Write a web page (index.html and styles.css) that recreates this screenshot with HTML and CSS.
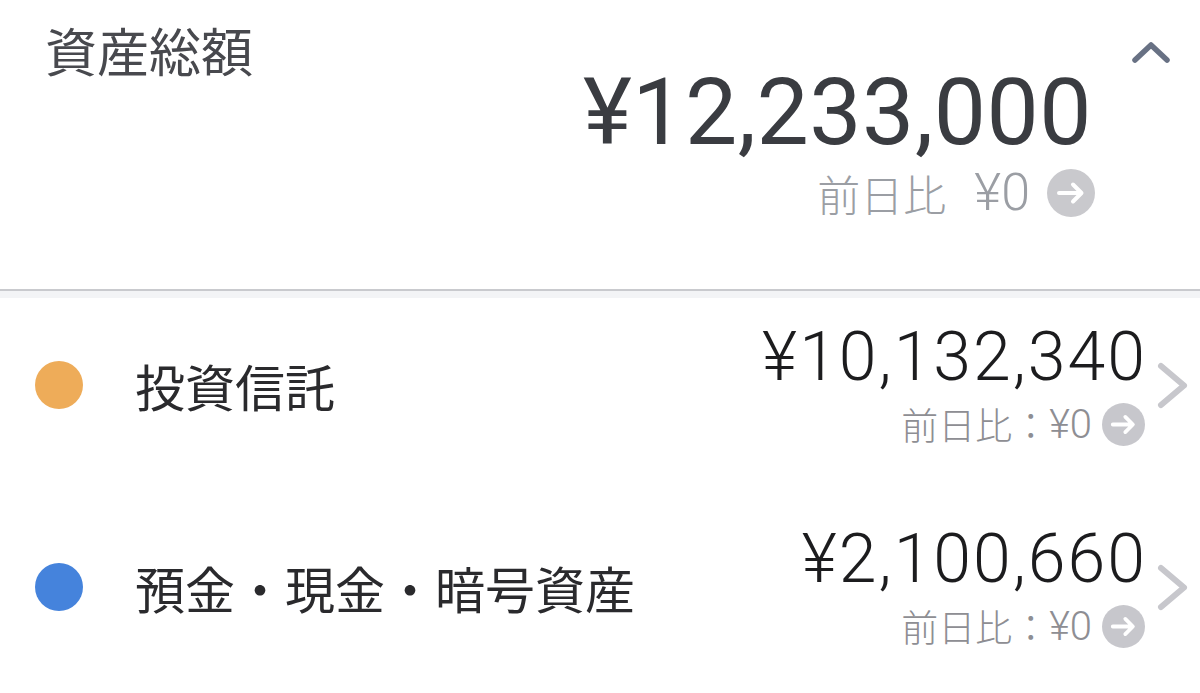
FILE: index.html
```html
<!DOCTYPE html>
<html lang="ja">
<head>
<meta charset="utf-8">
<title>資産総額</title>
<link rel="stylesheet" href="styles.css">
</head>
<body>
<section class="summary">
  <h1 class="title">資産総額</h1>
  <div class="total">
    <div class="total-amount">¥12,233,000</div>
    <div class="change change-lg">
      <span class="change-text">前日比</span>
      <span class="change-num">¥0</span>
      <svg class="go go-lg" viewBox="0 0 48 48" aria-hidden="true">
        <circle cx="24" cy="24" r="24" fill="#c9c9cd"/>
        <path d="M12 24 H34 M26 15.5 L34.5 24 L26 32.5" fill="none" stroke="#fff" stroke-width="4" stroke-linecap="round" stroke-linejoin="round"/>
      </svg>
    </div>
  </div>
  <svg class="collapse" viewBox="0 0 40 24" aria-hidden="true">
    <path d="M4 20 L20 5 L36 20" fill="none" stroke="#687184" stroke-width="5.5" stroke-linecap="round" stroke-linejoin="round"/>
  </svg>
</section>
<div class="divider"></div>
<ul class="list">
  <li class="row">
    <span class="dot dot-orange"></span>
    <span class="label">投資信託</span>
    <div class="value">
      <div class="amount">¥10,132,340</div>
      <div class="change">
        <span class="change-text">前日比：</span>
        <span class="change-num">¥0</span>
        <svg class="go" viewBox="0 0 48 48" aria-hidden="true">
          <circle cx="24" cy="24" r="24" fill="#c7c7cc"/>
          <path d="M12 24 H34 M26 15.5 L34.5 24 L26 32.5" fill="none" stroke="#fff" stroke-width="4.2" stroke-linecap="round" stroke-linejoin="round"/>
        </svg>
      </div>
    </div>
    <svg class="chev" viewBox="0 0 31 47" aria-hidden="true">
      <path d="M4 4 L27 23.5 L4 43" fill="none" stroke="#c7c7cc" stroke-width="6" stroke-linecap="round" stroke-linejoin="round"/>
    </svg>
  </li>
  <li class="row">
    <span class="dot dot-blue"></span>
    <span class="label">預金・現金・暗号資産</span>
    <div class="value">
      <div class="amount">¥2,100,660</div>
      <div class="change">
        <span class="change-text">前日比：</span>
        <span class="change-num">¥0</span>
        <svg class="go" viewBox="0 0 48 48" aria-hidden="true">
          <circle cx="24" cy="24" r="24" fill="#c7c7cc"/>
          <path d="M12 24 H34 M26 15.5 L34.5 24 L26 32.5" fill="none" stroke="#fff" stroke-width="4.2" stroke-linecap="round" stroke-linejoin="round"/>
        </svg>
      </div>
    </div>
    <svg class="chev" viewBox="0 0 31 47" aria-hidden="true">
      <path d="M4 4 L27 23.5 L4 43" fill="none" stroke="#c7c7cc" stroke-width="6" stroke-linecap="round" stroke-linejoin="round"/>
    </svg>
  </li>
</ul>
</body>
</html>
```

FILE: styles.css
```css
* { box-sizing: border-box; }

html, body {
  margin: 0;
  padding: 0;
  background: #ffffff;
  width: 1200px;
  height: 693px;
  overflow: hidden;
  font-family: "Noto Sans CJK JP", "Noto Sans", sans-serif;
}

.summary {
  display: flex;
  align-items: flex-start;
  height: 289px;
  padding: 0 29px 0 45px;
}

.title {
  margin: 24px 0 0 0;
  font-size: 52px;
  font-weight: 400;
  line-height: 1;
  color: #48494e;
}

.total {
  margin-left: auto;
  margin-top: 66px;
  display: flex;
  flex-direction: column;
  align-items: flex-end;
}

.total-amount {
  font-family: Roboto, "Liberation Sans", sans-serif;
  font-size: 93px;
  font-weight: 400;
  line-height: 1;
  letter-spacing: 0.5px;
  color: #3a3c41;
  margin-right: 3px;
}

.change {
  display: flex;
  align-items: center;
  margin-top: 11px;
  height: 46px;
  line-height: 1;
  color: #8e8e93;
}

.change-text {
  font-family: "Noto Sans CJK JP", sans-serif;
  font-size: 37px;
  font-weight: 300;
  white-space: nowrap;
}

.change-num {
  font-family: Roboto, "Liberation Sans", sans-serif;
  font-size: 40px;
  font-weight: 300;
  margin-left: 0;
  margin-right: 10px;
}

.change-lg {
  margin-top: 10px;
  height: 48px;
  color: #9b9ea4;
}

.change-lg .change-text {
  font-size: 43px;
}

.change-lg .change-num {
  font-size: 52px;
  font-weight: 300;
  margin-left: 28px;
  margin-right: 17px;
}

.go {
  width: 43px;
  height: 43px;
  flex: none;
}

.go-lg {
  width: 48px;
  height: 48px;
}

.collapse {
  width: 40px;
  height: 24px;
  margin: 40px 0 0 36px;
  flex: none;
}

.divider {
  height: 9px;
  border-top: 2px solid #c9cace;
  background: #f3f4f6;
}

.list {
  list-style: none;
  margin: 0;
  padding: 0;
}

.row {
  display: flex;
  align-items: center;
  height: 202px;
  padding: 0 12px 28px 35px;
}

.dot {
  width: 48px;
  height: 48px;
  border-radius: 50%;
  flex: none;
  margin-right: 52px;
}

.dot-orange { background: #eeac59; }
.dot-blue { background: #4583dc; }

.label {
  font-size: 50px;
  line-height: 1;
  color: #2a2a2d;
  white-space: nowrap;
}

.value {
  margin-left: auto;
  display: flex;
  flex-direction: column;
  align-items: flex-end;
}

.amount {
  font-family: Roboto, "Liberation Sans", sans-serif;
  font-size: 68px;
  font-weight: 300;
  line-height: 1;
  letter-spacing: 2px;
  color: #1c1c1e;
  margin-right: -2px;
}

.chev {
  width: 31px;
  height: 47px;
  margin-left: 12px;
  flex: none;
}
```
